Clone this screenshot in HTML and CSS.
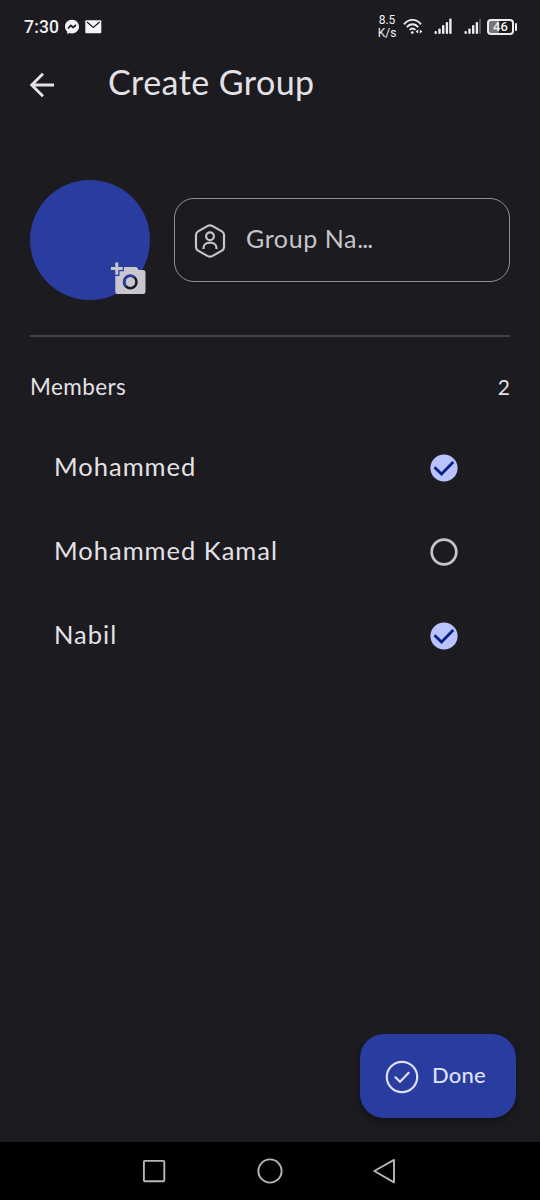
FILE: index.html
```html
<!DOCTYPE html>
<html lang="en">
<head>
<meta charset="utf-8">
<meta name="viewport" content="width=device-width">
<title>Create Group</title>
<link rel="stylesheet" href="styles.css">
</head>
<body>
<div class="screen">
  <header class="status">
    <span class="time">7:30</span>
    <svg class="messenger" width="16" height="16" viewBox="0 0 16 16"><path fill="#f4f4f6" d="M8 .8C3.8.8 1 3.800 1 7.600c0 2 .8 3.700 2.100 4.900l.2 2.500 2.200-1C6.300 14.200 7.100 14.400 8 14.400c4.200 0 7-3 7-6.800S12.200.8 8 .8z"/><path d="M4 9.500 6.800 6.500 9.200 8.500 12 6" fill="none" stroke="#1c1b1f" stroke-width="1.700"/></svg>
    <svg class="mail" width="17" height="14" viewBox="0 0 17 14"><rect x=".3" y=".3" width="16" height="13" rx="1" fill="#f4f4f6"/><path d="M2 2l6.300 5.500L14.600 2" fill="none" stroke="#1c1b1f" stroke-width="1.200"/></svg>
    <span class="speed"><span>8.5</span><span>K/s</span></span>
    <svg class="wifi" width="20" height="18" viewBox="0 0 20 18" fill="none" stroke="#ececef" stroke-width="1.900"><path d="M1 6.300C5.600 .4 13.400.4 18 6.300M3.800 9.200c3.200-4 8.200-4 11.400 0M6.600 12c1.700-2 4.100-2 5.800 0"/><circle cx="9.300" cy="14.600" r="1.400" fill="#ececef" stroke="none"/><path d="M12.600 13.600l2.600-2v4zM19.400 13.600l-2.600-2v4z" fill="#ececef" stroke="none"/></svg>
    <svg class="signal first" width="18" height="17" viewBox="0 0 18 17" fill="#ececef"><rect x=".5" y="13" width="2.400" height="3" rx="1"/><rect x="4.300" y="10.500" width="2.400" height="5.500" rx="1"/><rect x="8" y="7" width="2.400" height="9" rx="1"/><rect x="11.700" y="4" width="2.400" height="12" rx="1"/><rect x="15.200" y=".5" width="2.400" height="15.500" rx="1"/></svg>
    <svg class="signal second" width="18" height="17" viewBox="0 0 18 17" fill="#ececef"><rect x=".5" y="13" width="2.400" height="3" rx="1"/><rect x="4.300" y="10.500" width="2.400" height="5.500" rx="1"/><rect x="8" y="7" width="2.400" height="9" rx="1"/><rect x="11.700" y="4" width="2.400" height="12" rx="1"/><rect x="15" y=".5" width="2" height="15.500" rx="1" fill="#55545a"/></svg>
    <span class="battery">46</span><span class="battery-tip"></span>
  </header>

  <div class="appbar">
    <svg width="26" height="26" viewBox="0 0 26 26" fill="none" stroke="#e6e2e8" stroke-width="2.800"><path d="M25 13H3M14 1.700 2.700 13 14 24.300"/></svg>
    <h1>Create Group</h1>
  </div>

  <section class="identity">
    <div class="avatar">
      <svg class="camera" width="37" height="34" viewBox="0 0 37 34"><path fill="#c9c6d0" d="M5.300 9.500V5.300H14.500L15 5h11.500l2.300 3H33a2.500 2.500 0 0 1 2.500 2.500v19A2.500 2.500 0 0 1 33 32H7.800a2.500 2.500 0 0 1-2.500-2.500z"/><path fill="#c9c6d0" stroke="#293ca0" stroke-width="2.400" paint-order="stroke" d="M5.300.5h3v4.600h4.400v3H8.300v4.600h-3V8.100H.9v-3h4.400z"/><circle cx="20.300" cy="20" r="6.200" fill="#c9c6d0" stroke="#1c1b1f" stroke-width="2.600"/><path d="M16 24.500A6.200 6.200 0 0 1 24.600 15.500" fill="none" stroke="#293ca0" stroke-width="2.600"/></svg>
    </div>
    <div class="field">
      <svg width="32" height="34" viewBox="0 0 32 34" fill="none" stroke="#c7c5cc" stroke-width="2.200"><path d="M13.800 1.900q2.200-1.200 4.400 0l9.700 5.500q2.100 1.200 2.100 3.600v12q0 2.400-2.100 3.600l-9.700 5.500q-2.200 1.200-4.400 0l-9.700-5.500Q2 25.400 2 23V11q0-2.400 2.100-3.600z"/><circle cx="16" cy="12.300" r="3.900"/><path d="M9.500 25v-1.100c0-3.100 2.900-5.200 6.500-5.200s6.500 2.100 6.500 5.200V25"/></svg>
      <span class="hint">Group Na<span class="dots">...</span></span>
    </div>
  </section>

  <div class="members-head"><span>Members</span><span class="count">2</span></div>

  <ul class="members">
    <li><span>Mohammed</span><svg width="28" height="28" viewBox="0 0 28 28"><circle cx="14" cy="14" r="13.600" fill="#bac3ff"/><path d="M4.500 13.300l7 6.700L23.300 8" fill="none" stroke="#08218a" stroke-width="2.800"/></svg></li>
    <li><span>Mohammed Kamal</span><svg width="28" height="28" viewBox="0 0 28 28"><circle cx="14" cy="14" r="12.300" fill="none" stroke="#c9c6cb" stroke-width="2.700"/></svg></li>
    <li><span>Nabil</span><svg width="28" height="28" viewBox="0 0 28 28"><circle cx="14" cy="14" r="13.600" fill="#bac3ff"/><path d="M4.500 13.300l7 6.700L23.300 8" fill="none" stroke="#08218a" stroke-width="2.800"/></svg></li>
  </ul>

  <div class="action">
    <button class="done"><svg width="34" height="34" viewBox="0 0 34 34" fill="none" stroke="#dee0ff" stroke-width="2.200"><circle cx="17" cy="17" r="15.200"/><path d="M10.400 17.300l4.600 4.500 8.700-9" stroke-linecap="round"/></svg><span>Done</span></button>
  </div>

  <nav class="navbar">
    <svg width="24" height="24" viewBox="0 0 24 24"><rect x="1.900" y="1.900" width="20.400" height="20.400" rx="1" fill="none" stroke="#b6b6b6" stroke-width="1.900"/></svg>
    <svg width="26" height="26" viewBox="0 0 26 26"><circle cx="13" cy="13" r="11.600" fill="none" stroke="#b6b6b6" stroke-width="1.900"/></svg>
    <svg class="back" width="24" height="26" viewBox="0 0 24 26"><path d="M22 1.900v22.500L2.300 13z" fill="none" stroke="#b6b6b6" stroke-width="1.900" stroke-linejoin="round"/></svg>
  </nav>
</div>
</body>
</html>
```
FILE: styles.css
```css
* { box-sizing: border-box; }
body { margin: 0; background: #1c1b1f; color: #e4e1e6; font-family: Lato, "Noto Sans", sans-serif; }
svg { display: block; flex: none; }
.screen { width: 540px; height: 1200px; display: flex; flex-direction: column; overflow: hidden; }

.status { height: 53px; display: flex; align-items: center; padding: 0 26px 0 24px; color: #f0f0f3; }
.time { font: 500 17.500px/22px Roboto, sans-serif; width: 40px; white-space: nowrap; letter-spacing: .2px; }
.mail { margin-left: 5px; }
.speed { display: flex; flex-direction: column; align-items: center; margin-left: auto; font: 400 12px/13px Roboto, sans-serif; width: 20px; padding-top: 1px; }
.wifi { margin-left: 6px; }
.signal.first { margin-left: 11px; }
.signal.second { margin-left: 12px; }
.battery { width: 27px; height: 16px; margin-left: 5px; border: 2px solid #ececef; border-radius: 4px; background: linear-gradient(90deg, #77767b 0 45%, transparent 45%); background-origin: content-box; font: 500 13px/12px Roboto, sans-serif; text-align: center; }
.battery-tip { width: 2px; height: 8px; margin: 0 -3px 0 1px; background: #ececef; border-radius: 1px; }

.appbar { height: 63px; display: flex; align-items: center; gap: 53px; padding-left: 29px; }
h1 { margin: -5px 0 0; font-size: 34px; line-height: 40px; font-weight: 400; letter-spacing: .45px; }

.identity { height: 221px; margin: 0 30px; padding-top: 64px; display: flex; gap: 24px; border-bottom: 2px solid #434248; }
.avatar { width: 120px; height: 120px; border-radius: 50%; background: #293ca0; position: relative; flex: none; }
.camera { position: absolute; left: 80px; top: 82px; overflow: visible; }
.field { flex: 1; height: 84px; margin-top: 18px; border: 1.500px solid #918f9a; border-radius: 20px; display: flex; align-items: center; padding-left: 19px; color: #c7c5cc; font-size: 25px; line-height: 30px; letter-spacing: .6px; gap: 20px; }
.field svg { margin-top: 1px; }
.hint { margin-top: -4px; }
.dots { letter-spacing: -.9px; }

.members-head { display: flex; justify-content: space-between; margin: 36px 30px 0; font-size: 22.500px; line-height: 28px; letter-spacing: .4px; }
.count { letter-spacing: 0; font-size: 21px; }
.members { list-style: none; margin: 25px 0 0; padding: 0 82px 0 54px; font-size: 25.500px; letter-spacing: 1px; }
.members li { height: 84px; display: flex; align-items: center; justify-content: space-between; }
.members span { margin-top: -4px; }

.action { margin-top: auto; height: 108px; display: flex; justify-content: flex-end; align-items: flex-start; padding-right: 24px; }
.done { width: 156px; height: 84px; border: 0; border-radius: 24px; background: #293ca0; color: #dee0ff; font: 500 22px/28px Lato, sans-serif; letter-spacing: .2px; padding: 0 0 0 25px; display: flex; align-items: center; gap: 13px; box-shadow: 0 4px 8px rgba(0, 0, 0, .35); }
.done svg { margin-top: 1px; }
.done span { margin-top: -3px; }

.navbar { height: 58px; flex: none; background: #000; display: flex; align-items: center; padding-left: 142px; gap: 91px; }
.back { margin-left: -2px; }
```
